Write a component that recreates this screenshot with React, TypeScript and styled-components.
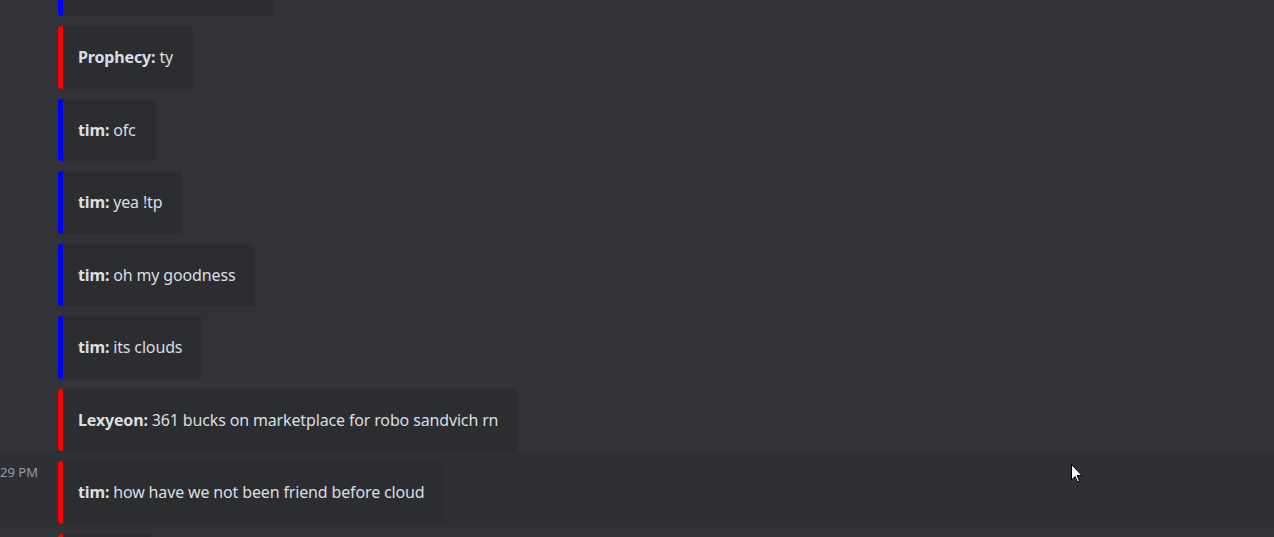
import React from "react";
import styled, { createGlobalStyle } from "styled-components";

const Global = createGlobalStyle`
  html, body { margin: 0; padding: 0; background: #313338; overflow: hidden; }
  body { font-family: "Noto Sans", "Open Sans", sans-serif; }
`;

const Viewport = styled.div`
  position: relative;
  width: 1274px;
  height: 537px;
  overflow: hidden;
  background: #313338;
`;

const List = styled.div`
  display: flex;
  flex-direction: column;
  margin-top: -56.5px;
`;

const Row = styled.div<{ $hover?: boolean }>`
  display: flex;
  align-items: flex-start;
  padding: 10px 0 ${(p) => (p.$hover ? "3px" : "0")};
  margin-bottom: ${(p) => (p.$hover ? "-3px" : "0")};
  background: ${(p) => (p.$hover ? "#2e3035" : "transparent")};
`;

const Gutter = styled.div`
  width: 58px;
  flex: 0 0 58px;
  display: flex;
  justify-content: flex-end;
  padding-right: 20px;
  box-sizing: border-box;
  overflow: visible;
`;

const Stamp = styled.span`
  font-family: "Noto Sans", sans-serif;
  font-size: 13px;
  color: #949ba4;
  white-space: nowrap;
  margin-top: 2px;
`;

const Card = styled.div<{ $color: string }>`
  box-sizing: border-box;
  height: 62.5px;
  display: flex;
  align-items: center;
  background: #2b2d31;
  border-left: 5px solid ${(p) => p.$color};
  border-radius: 4px;
  padding: 0 20px 0 15px;
  font-size: 16px;
  letter-spacing: -0.15px;
  color: #dbdee1;
  white-space: nowrap;
`;

const Name = styled.b`
  font-weight: 700;
  color: #dbdee1;
  margin-right: 4px;
`;

const Cursor = styled.svg`
  position: absolute;
  left: 1071px;
  top: 464px;
`;

type Msg = { name: string; text: string; color: string; hover?: boolean; stamp?: string };

const BLUE = "#0000ff";
const RED = "#ff0000";

const msgs: Msg[] = [
  { name: "tim:", text: "wait where are you", color: BLUE },
  { name: "Prophecy:", text: "ty", color: RED },
  { name: "tim:", text: "ofc", color: BLUE },
  { name: "tim:", text: "yea !tp", color: BLUE },
  { name: "tim:", text: "oh my goodness", color: BLUE },
  { name: "tim:", text: "its clouds", color: BLUE },
  { name: "Lexyeon:", text: "361 bucks on marketplace for robo sandvich rn", color: RED },
  { name: "tim:", text: "how have we not been friend before cloud", color: RED, hover: true, stamp: "3:29 PM" },
  { name: "tim:", text: "ok", color: RED },
];

export default function App() {
  return (
    <Viewport>
      <Global />
      <List>
        {msgs.map((m, i) => (
          <Row key={i} $hover={m.hover}>
            <Gutter>{m.stamp && <Stamp>{m.stamp}</Stamp>}</Gutter>
            <Card $color={m.color}>
              <Name>{m.name}</Name>
              {m.text}
            </Card>
          </Row>
        ))}
      </List>
      <Cursor width="12" height="19" viewBox="0 0 12 19">
        <path d="M0.5 0.5 L0.5 16 L4 12.5 L6.5 18 L8.5 17 L6 11.5 L11 11.5 Z" fill="#fff" stroke="#000" strokeWidth="1" />
      </Cursor>
    </Viewport>
  );
}
